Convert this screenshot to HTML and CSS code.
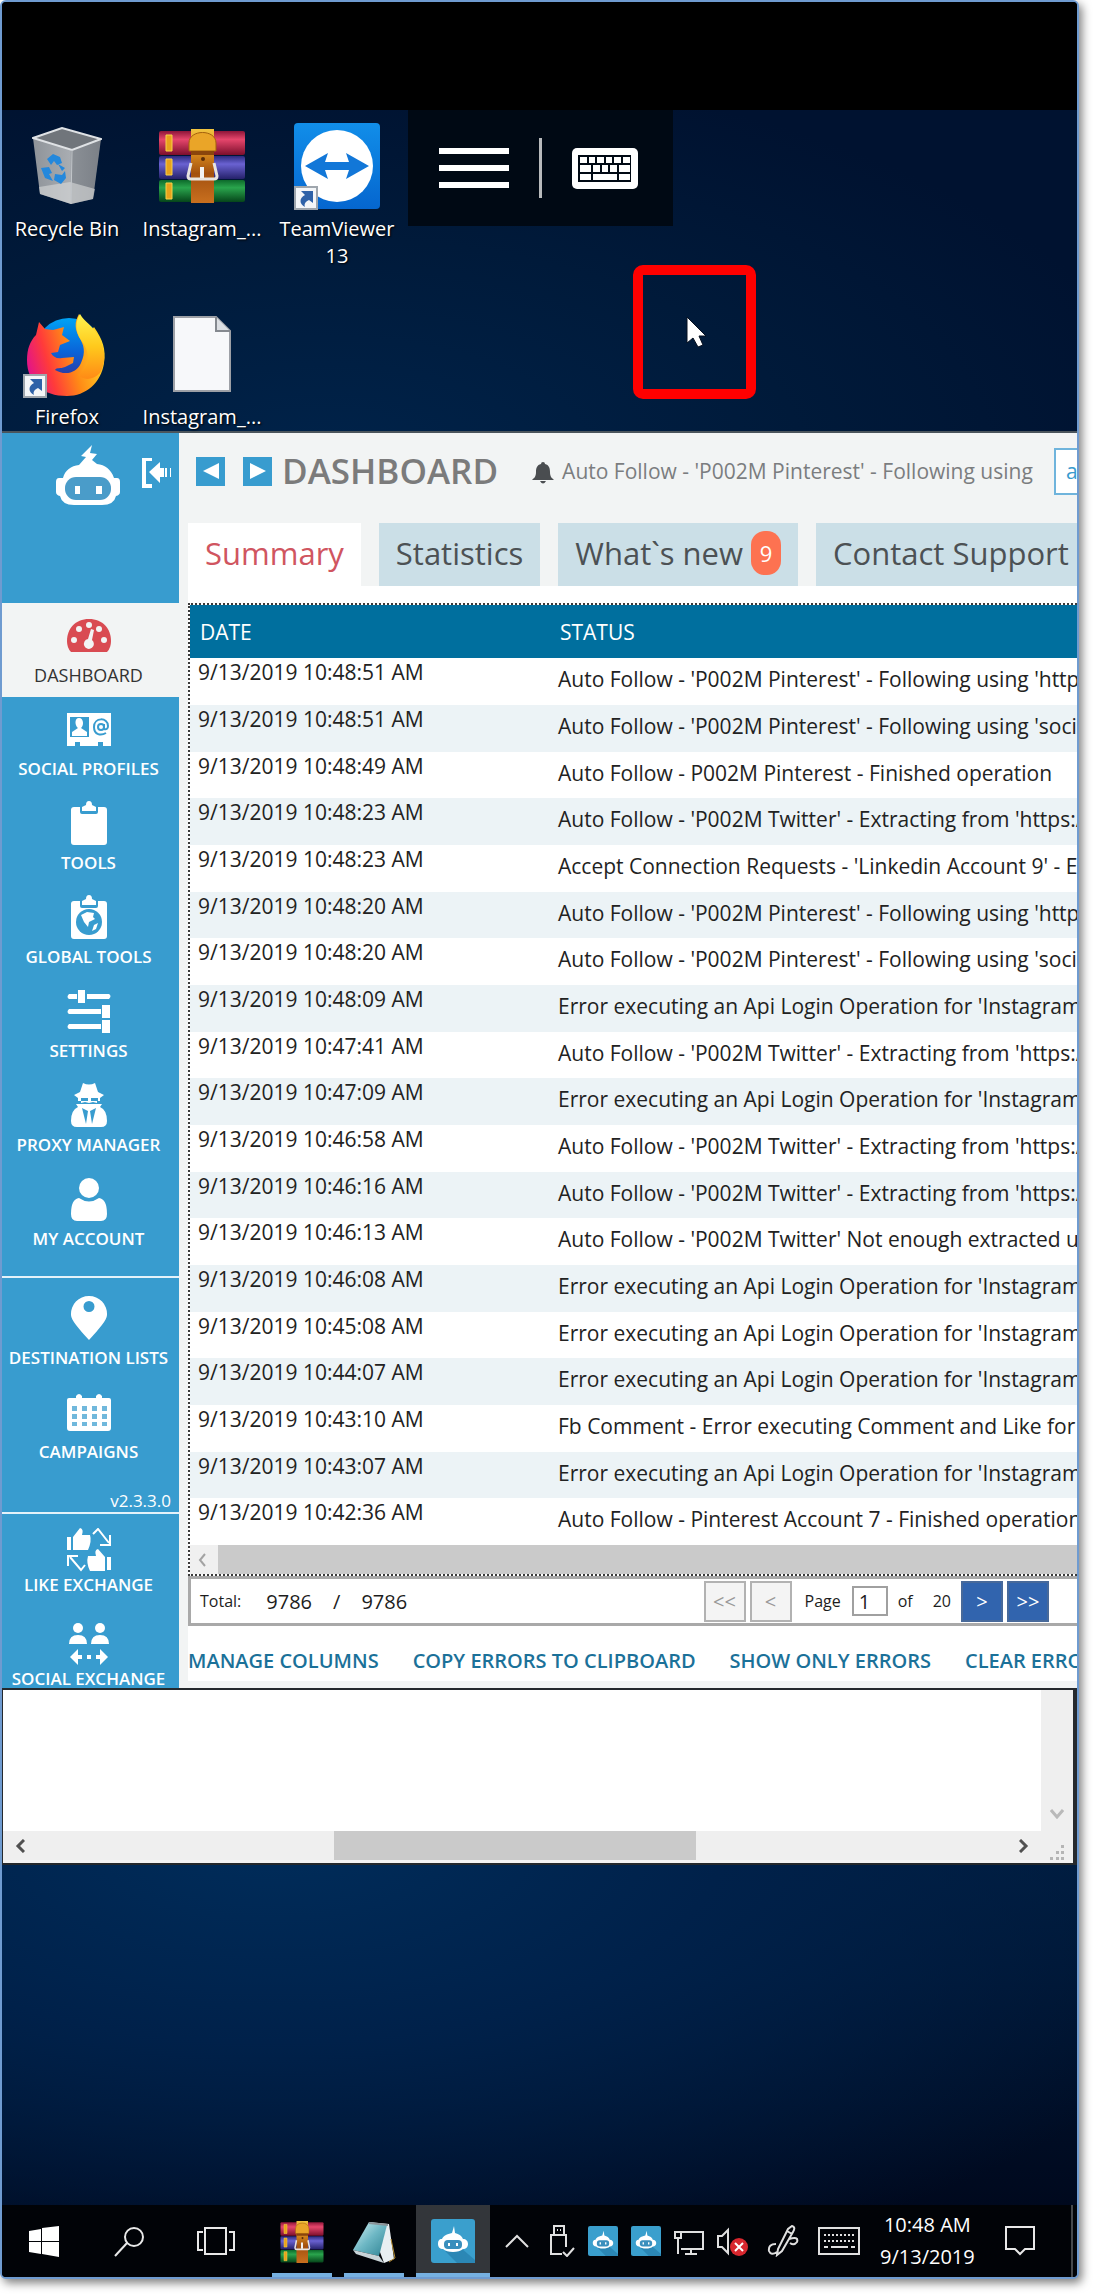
FILE: index.html
```html
<!DOCTYPE html>
<html lang="en">
<head>
<meta charset="utf-8">
<meta name="viewport" content="width=device-width, initial-scale=1">
<title>Dashboard</title>
<link rel="stylesheet" href="styles.css">
</head>
<body>
<svg class="sprite" width="0" height="0" aria-hidden="true">
  <defs>
    <linearGradient id="red" x2="0" y2="1"><stop stop-color="#8d1538"/><stop offset=".35" stop-color="#e6466c"/><stop offset="1" stop-color="#7c0f2c"/></linearGradient>
    <linearGradient id="blue" x2="0" y2="1"><stop stop-color="#2c2a7d"/><stop offset=".35" stop-color="#6a62d2"/><stop offset="1" stop-color="#25216a"/></linearGradient>
    <linearGradient id="green" x2="0" y2="1"><stop stop-color="#0d6a2b"/><stop offset=".35" stop-color="#2aa54d"/><stop offset="1" stop-color="#06451a"/></linearGradient>
    <linearGradient id="belt" x2="0" y2="1"><stop stop-color="#f1c440"/><stop offset=".3" stop-color="#dc8f1e"/><stop offset=".6" stop-color="#a3500f"/><stop offset="1" stop-color="#c9701f"/></linearGradient>
    <linearGradient id="binside" x2="1" y2="0"><stop stop-color="#8e9399"/><stop offset=".55" stop-color="#a9adb2"/><stop offset=".56" stop-color="#8b9096"/><stop offset="1" stop-color="#7b8087"/></linearGradient>
    <linearGradient id="tv" x2="0" y2="1"><stop stop-color="#118ee9"/><stop offset="1" stop-color="#0566cf"/></linearGradient>
    <linearGradient id="fox" x1="0" y1=".6" x2="1" y2=".3"><stop stop-color="#e31587"/><stop offset=".25" stop-color="#ff3b3a"/><stop offset=".55" stop-color="#ff8a16"/><stop offset="1" stop-color="#ffe226"/></linearGradient>
    <linearGradient id="globe" x2="0" y2="1"><stop stop-color="#00a3f5"/><stop offset=".5" stop-color="#0a63d8"/><stop offset="1" stop-color="#3b2a8c"/></linearGradient>
    <linearGradient id="flame" x2="0" y2="1"><stop stop-color="#fff44f"/><stop offset=".5" stop-color="#ffc91c"/><stop offset="1" stop-color="#ff8a16"/></linearGradient>
    <linearGradient id="pad" x2="1" y2="1"><stop stop-color="#d7f3f6"/><stop offset=".5" stop-color="#6db7c4"/><stop offset="1" stop-color="#2f8293"/></linearGradient>
  </defs>
  <symbol id="i-rar" viewBox="0 0 88 74">
    <rect x="1" y="2" width="86" height="24" rx="2" fill="url(#red)"/>
    <rect x="1" y="27" width="86" height="23" rx="2" fill="url(#blue)"/>
    <rect x="1" y="51" width="86" height="22" rx="2" fill="url(#green)"/>
    <path d="M8 6h6v16H8zM8 30h6v16H8zM8 54h6v16H8z" fill="#e8a21c" stroke="#f6d24a"/>
    <path d="M33 0h23v74H33z" fill="url(#belt)"/>
    <path d="M31 22v-8c0-14 27-14 27 0v8z" fill="#eaa528" stroke="#a3600d"/>
    <path d="M33 22h23v4H33z" fill="#8a450c"/>
    <path d="M33 34l-3 13q0 3 3 3h23q3 0 3-3l-3-13" fill="none" stroke="#e8e4e0" stroke-width="3"/>
    <path d="M44 38v11" stroke="#f2f2f2" stroke-width="4"/><circle cx="45" cy="30" r="2" fill="#5a2c08"/>
  </symbol>
  <symbol id="i-robot" viewBox="0 0 66 62">
    <path d="M37 2L26 13l5 1-7 8c-8 1-14 5-16 13H4q-3 0-3 4v10q0 3 4 4 2 9 14 9h28q12 0 14-9 4-1 4-4V39q0-4-3-4h-3c-3-9-9-13-17-14l-5-4 5-6-7-1z" fill="#fff"/>
    <rect x="10" y="34" width="46" height="23" rx="11" fill="#4a9cc9"/>
    <path d="M20 43h5v8h-5zM41 43h6v8h-6z" fill="#fff"/>
  </symbol>
  <symbol id="i-robot-app" viewBox="0 0 44 44">
    <rect width="44" height="44" rx="3" fill="#3a9fcd"/><path d="M14 32l16-3 14 12v3H26z" fill="#2b87b5"/>
    <path d="M23 7l-2 7c-5 1-9 3-10 6-3 0-4 2-4 5s2 5 5 5c2 2 6 3 10 3s8-1 10-3c3 0 5-2 5-5s-2-5-5-5c-1-3-4-5-8-6z" fill="#fff"/>
    <rect x="13" y="21" width="18" height="9" rx="4" fill="#3a8fbd"/><path d="M17 24h2v3h-2zM25 24h2v3h-2z" fill="#fff"/>
  </symbol>
  <symbol id="i-clip" viewBox="0 0 44 44">
    <path d="M7 6h6v5q0 2 2 2h14q2 0 2-2V6h6q3 0 3 3v32q0 3-3 3H7q-3 0-3-3V9q0-3 3-3z"/>
    <path d="M19 4q0-4 3-4t3 4l4 2v4H15V6z"/>
  </symbol>
  <symbol id="i-shortcut" viewBox="0 0 24 24">
    <path d="M1 1h22v22H1z" fill="#f4f6f8" stroke="#9fa6ad" stroke-width="2"/>
    <path d="M7 5h12v12l-4-3c-4 2-5 4-4 7-6-3-6-9 0-12z" fill="#2f62a8"/>
  </symbol>
</svg>

<div class="frame">
  <div class="letterbox"></div>

  <section class="desktop">
    <ul class="shortcuts">
      <li><span class="pic"><svg width="70" height="78" viewBox="0 0 70 78">
        <path d="M1 11L30 1l39 11-8 60-22 5-31-10z" fill="url(#binside)"/>
        <path d="M1 11L30 1l39 11-29 11z" fill="#70757b" stroke="#dfe2e5" stroke-width="2"/>
        <path d="M7 60l31-5 25 7-2 10-22 5-31-10z" fill="#d9dadb" opacity=".6"/>
        <path d="M40 23l-1 54" stroke="#c3c7cb"/>
        <path d="M15 32l6-5 7 3 2 6-5 2-3-4-3 4zM9 41l8-1 3 6-3 1 4 7-8-3zM23 47l7 1 3-4 1 7-5 6-7-4zM26 37l7 4-3 3z" fill="#2488dc"/></svg></span>Recycle Bin</li>
      <li><span class="pic"><svg width="88" height="74"><use href="#i-rar"/></svg></span>Instagram_...</li>
      <li><span class="pic"><svg width="88" height="88" viewBox="0 0 88 88">
        <rect x="1" y="1" width="86" height="86" rx="4" fill="url(#tv)"/><circle cx="44" cy="44" r="36" fill="#fff"/>
        <path d="M12 44l23-13-3 9h24l-3-9 23 13-23 13 3-9H32l3 9z" fill="#1277d8"/>
        <use href="#i-shortcut" x="1" y="64" width="24" height="24"/></svg></span>TeamViewer 13</li>
      <li><span class="pic"><svg width="88" height="88" viewBox="0 0 88 88">
        <circle cx="46" cy="42" r="34" fill="url(#globe)"/>
        <path d="M16 12l6 7 8 1 11-3-2 8 8 6-10 4-2 7-7 1c2 4 6 6 11 5l12-1-1 6-8 4c-5 2-8 0-10 3 10 6 22 3 26-7 5-11 3-18-2-26-4-8-5-14 0-23 5 8 8 9 12 17l3-4c9 13 12 22 10 36-3 20-18 33-37 33C20 86 4 73 4 50c0-11 3-19 9-25z" fill="url(#fox)"/>
        <path d="M57 4c5 9 12 10 19 23 8 16 6 27 1 36-8 8-17 7-22 2 14-9 12-23 3-35-6-9-6-18-1-26z" fill="url(#flame)"/>
        <use href="#i-shortcut" x="0" y="64" width="24" height="24"/></svg></span>Firefox</li>
      <li><span class="pic"><svg width="58" height="76" viewBox="0 0 58 76">
        <path d="M1 1h42l14 14v60H1z" fill="#f7f8fa" stroke="#9da0a6" stroke-width="2"/><path d="M43 1v14h14" fill="#dcdfe3" stroke="#85898f" stroke-width="2"/></svg></span>Instagram_...</li>
    </ul>
    <div class="remote-bar">
      <button type="button" aria-label="Menu"><svg width="70" height="40" viewBox="0 0 70 40" fill="#fff"><path d="M0 0h70v6H0zM0 17h70v6H0zM0 34h70v6H0z"/></svg></button>
      <span class="remote-split"></span>
      <button type="button" aria-label="Keyboard"><svg width="66" height="41" viewBox="0 0 66 41">
        <rect width="66" height="41" rx="5" fill="#fff"/><path d="M6 7h53v27H6z" fill="#000914"/>
        <path d="M8 9h7v6H8zM17 9h6v6h-6zM25 9h7v6h-7zM34 9h6v6h-6zM42 9h7v6h-7zM51 9h7v6h-7zM8 17h11v7H8zM21 17h7v7h-7zM30 17h6v7h-6zM38 17h7v7h-7zM47 17h11v7H47zM8 26h11v6H8zM21 26h24v6H21zM47 26h11v6H47z" fill="#fff"/></svg></button>
    </div>
    <div class="marker"><svg width="22" height="32" viewBox="0 0 22 32"><path d="M1 1v26l6-5 5 9 5-2-4-9h7z" fill="#fff" stroke="#061020"/></svg></div>
  </section>

  <section class="app">
    <aside class="side">
      <div class="brand">
        <svg width="66" height="62"><use href="#i-robot"/></svg>
        <button type="button" aria-label="Collapse menu"><svg width="30" height="30" viewBox="0 0 30 30" fill="#fff"><path d="M0 0h10v3H4v23h6v4H0zM7 14L18 4v6h4v9h-4v6zM23 10h2v9h-2zM28 10h1v9h-1z"/></svg></button>
      </div>
      <nav class="menu">
        <a class="on" href="#"><svg width="44" height="44" viewBox="0 0 44 44"><path d="M22 6C8 6 0 16 0 28q0 7 4 11h36q4-4 4-11C44 16 36 6 22 6z"/><g fill="#f2f4f4"><circle cx="7" cy="27" r="3"/><circle cx="12" cy="16" r="3"/><circle cx="22" cy="12" r="3"/><circle cx="32" cy="16" r="3"/><circle cx="37" cy="27" r="3"/><path d="M24 16l3 1-2 10a5 5 0 1 1-4-1z"/></g></svg>DASHBOARD</a>
        <a href="#"><svg width="44" height="44" viewBox="0 0 44 44"><path d="M0 6h44v33h-8v-4h-5v4H13v-4H8v4H0z"/><path d="M3 10h19v20H3z" fill="#389ccf"/><path d="M12 11c5 0 5 8 2 10l6 4v4H5v-4l6-4c-3-2-4-10 1-10z"/><g fill="none" stroke="#389ccf" stroke-width="2"><circle cx="34" cy="20" r="3"/><path d="M37 17v5q4 1 4-3c0-9-14-9-14 1 0 8 7 9 12 6"/></g></svg>SOCIAL PROFILES</a>
        <a href="#"><svg width="44" height="44"><use href="#i-clip"/></svg>TOOLS</a>
        <a href="#"><svg width="44" height="44" viewBox="0 0 44 44"><use href="#i-clip"/><circle cx="22" cy="27" r="13" fill="#389ccf"/><path d="M14 20l6-3 7 1-1 4 2 2-6 3-1 5-4-5zM27 30l4-2-2 6-4 2z"/></svg>GLOBAL TOOLS</a>
        <a href="#"><svg width="44" height="44" viewBox="0 0 44 44"><path d="M2 5h8v5H2q-3-2 0-5zM20 5h22q3 2 0 5H20zM11 1h7v13h-7zM2 20h32v5H2q-3-2 0-5zM35 16h8v13h-8zM2 35h32v5H2q-3-2 0-5zM35 31h8v13h-8z"/></svg>SETTINGS</a>
        <a href="#"><svg width="44" height="44" viewBox="0 0 44 44"><path d="M16 0q6 3 12 0l3 9 6 3-4 3v3h-3v2l-4-1-4 1-4-1-4 1v-2h-3v-3l-4-3 6-3z"/><path d="M9 21h26l-2 3q7 3 7 14 0 6-6 6H10q-6 0-6-6 0-11 7-14z"/><path d="M15 25l6 3-2 13zM29 25l-6 3 2 13z" fill="#389ccf"/><path d="M14 15h7v3h-7zM24 15h7v3h-7z" fill="#389ccf"/></svg>PROXY MANAGER</a>
        <a href="#"><svg width="44" height="44" viewBox="0 0 44 44"><circle cx="22" cy="11" r="10"/><path d="M12 21q10 7 20 0 8 1 8 16 0 7-6 7H10q-6 0-6-7 0-15 8-16z"/></svg>MY ACCOUNT</a>
      </nav>
      <nav class="menu second">
        <a href="#"><svg width="44" height="44" viewBox="0 0 44 44"><path fill-rule="evenodd" d="M22 0a18 18 0 0 1 18 19c0 5-8 14-18 25C12 33 4 24 4 19A18 18 0 0 1 22 0zm0 5a5 5 0 1 0 0 11 5 5 0 0 0 0-11z"/></svg>DESTINATION LISTS</a>
        <a href="#"><svg width="44" height="44" viewBox="0 0 44 44"><path d="M2 8h7V6q3-4 6 0v2h14V6q3-4 6 0v2h7q2 0 2 2v28q0 3-3 3H3q-3 0-3-3V10q0-2 2-2z"/><path d="M5 16h5v5H5zM15 16h5v5h-5zM25 16h5v5h-5zM35 16h5v5h-5zM5 24h5v5H5zM15 24h5v5h-5zM25 24h5v5h-5zM35 24h5v5h-5zM5 32h5v4H5zM15 32h5v4h-5zM25 32h5v4h-5zM35 32h5v4h-5z" fill="#70b8dc"/></svg>CAMPAIGNS</a>
        <span class="version">v2.3.3.0</span>
      </nav>
      <nav class="menu third">
        <a href="#"><svg width="44" height="44" viewBox="0 0 44 44"><path d="M0 9h4v13H0zM6 9l7-9q4 1 2 7h8q2 6-2 15H6zM40 29h4v13h-4zM38 29l-7-8q-4 1-2 7h-8q-2 7 2 15h15z"/><path d="M26 6l5-5 11 14M43 7v10H33M18 37l-4 5L3 29M1 38V28h10" fill="none" stroke="#fff" stroke-width="2"/></svg>LIKE EXCHANGE</a>
        <a href="#"><svg width="44" height="44" viewBox="0 0 44 44"><circle cx="11" cy="6" r="5"/><circle cx="33" cy="6" r="5"/><path d="M2 22q0-9 9-9t9 9zM24 22q0-9 9-9t9 9zM3 35l8-8v6h4v4h-4v6zM20 33h4v4h-4zM41 35l-8-8v6h-4v4h4v6z"/></svg>SOCIAL EXCHANGE</a>
      </nav>
    </aside>

    <main class="main">
      <header class="head">
        <button class="step" type="button" aria-label="Back"><svg width="16" height="16" viewBox="0 0 16 16"><path d="M16 0v16L0 8z" fill="#fff"/></svg></button>
        <button class="step" type="button" aria-label="Forward"><svg width="16" height="16" viewBox="0 0 16 16"><path d="M0 0v16l16-8z" fill="#fff"/></svg></button>
        <h1>DASHBOARD</h1>
        <svg class="bell" width="22" height="22" viewBox="0 0 22 22"><path d="M11 0q2 0 2 2c4 1 5 4 5 8 0 5 2 6 4 8H0c2-2 4-3 4-8 0-4 1-7 5-8q0-2 2-2zM8 19h6q-3 5-6 0z" fill="#4a4d50"/></svg>
        <p>Auto Follow - 'P002M Pinterest' - Following using</p>
        <button class="more" type="button">a</button>
      </header>
      <div class="tabs">
        <button class="on" type="button">Summary</button>
        <button type="button">Statistics</button>
        <button type="button">What`s new <span class="count">9</span></button>
        <button type="button">Contact Support</button>
      </div>
      <div class="panel">
        <div class="grid">
          <table>
            <thead><tr><th class="date">DATE</th><th>STATUS</th></tr></thead>
            <tbody>
              <tr><td>9/13/2019 10:48:51 AM</td><td>Auto Follow - 'P002M Pinterest' - Following using 'http</td></tr>
              <tr><td>9/13/2019 10:48:51 AM</td><td>Auto Follow - 'P002M Pinterest' - Following using 'soci</td></tr>
              <tr><td>9/13/2019 10:48:49 AM</td><td>Auto Follow - P002M Pinterest - Finished operation</td></tr>
              <tr><td>9/13/2019 10:48:23 AM</td><td>Auto Follow - 'P002M Twitter' - Extracting from 'https:/</td></tr>
              <tr><td>9/13/2019 10:48:23 AM</td><td>Accept Connection Requests - 'Linkedin Account 9' - Ex</td></tr>
              <tr><td>9/13/2019 10:48:20 AM</td><td>Auto Follow - 'P002M Pinterest' - Following using 'http</td></tr>
              <tr><td>9/13/2019 10:48:20 AM</td><td>Auto Follow - 'P002M Pinterest' - Following using 'soci</td></tr>
              <tr><td>9/13/2019 10:48:09 AM</td><td>Error executing an Api Login Operation for 'Instagram A</td></tr>
              <tr><td>9/13/2019 10:47:41 AM</td><td>Auto Follow - 'P002M Twitter' - Extracting from 'https:/</td></tr>
              <tr><td>9/13/2019 10:47:09 AM</td><td>Error executing an Api Login Operation for 'Instagram A</td></tr>
              <tr><td>9/13/2019 10:46:58 AM</td><td>Auto Follow - 'P002M Twitter' - Extracting from 'https:/</td></tr>
              <tr><td>9/13/2019 10:46:16 AM</td><td>Auto Follow - 'P002M Twitter' - Extracting from 'https:/</td></tr>
              <tr><td>9/13/2019 10:46:13 AM</td><td>Auto Follow - 'P002M Twitter' Not enough extracted us</td></tr>
              <tr><td>9/13/2019 10:46:08 AM</td><td>Error executing an Api Login Operation for 'Instagram A</td></tr>
              <tr><td>9/13/2019 10:45:08 AM</td><td>Error executing an Api Login Operation for 'Instagram A</td></tr>
              <tr><td>9/13/2019 10:44:07 AM</td><td>Error executing an Api Login Operation for 'Instagram A</td></tr>
              <tr><td>9/13/2019 10:43:10 AM</td><td>Fb Comment - Error executing Comment and Like for t</td></tr>
              <tr><td>9/13/2019 10:43:07 AM</td><td>Error executing an Api Login Operation for 'Instagram A</td></tr>
              <tr><td>9/13/2019 10:42:36 AM</td><td>Auto Follow - Pinterest Account 7 - Finished operation</td></tr>
            </tbody>
          </table>
          <div class="grid-scroll"><svg width="8" height="14" viewBox="0 0 8 14"><path d="M7 1L2 7l5 6" fill="none" stroke="#a3a3a3" stroke-width="2"/></svg><span></span></div>
        </div>
        <div class="pager">
          <span class="small">Total:</span>
          <span class="totals"><span>9786</span><span>/</span><span>9786</span></span>
          <div class="pages">
            <button type="button" disabled>&lt;&lt;</button>
            <button type="button" disabled>&lt;</button>
            <label for="page">Page</label>
            <input id="page" type="text" value="1">
            <span class="of">of</span>
            <span class="last">20</span>
            <button type="button" class="go">&gt;</button>
            <button type="button" class="go">&gt;&gt;</button>
          </div>
        </div>
        <div class="actions">
          <a href="#">MANAGE COLUMNS</a><a href="#">COPY ERRORS TO CLIPBOARD</a><a href="#">SHOW ONLY ERRORS</a><a href="#">CLEAR ERRO</a>
        </div>
      </div>
    </main>
  </section>

  <section class="notes">
    <div class="notes-page"></div>
    <div class="vbar"><svg width="14" height="10" viewBox="0 0 14 10"><path d="M1 1l6 7 6-7" fill="none" stroke="#b9b9b9" stroke-width="3"/></svg></div>
    <div class="hbar">
      <svg width="10" height="14" viewBox="0 0 10 14"><path d="M9 1L3 7l6 6" fill="none" stroke="#505050" stroke-width="3"/></svg>
      <div class="track"><span></span></div>
      <svg width="10" height="14" viewBox="0 0 10 14"><path d="M1 1l6 6-6 6" fill="none" stroke="#505050" stroke-width="3"/></svg>
    </div>
    <div class="grip"><svg width="15" height="15" viewBox="0 0 15 15" fill="#b5b5b5"><path d="M11 0h3v3h-3zM11 6h3v3h-3zM6 6h3v3H6zM11 12h3v3h-3zM6 12h3v3H6zM0 12h3v3H0z"/></svg></div>
  </section>

  <div class="wallpaper"></div>

  <footer class="taskbar">
    <div class="group">
      <button class="wide" type="button" aria-label="Start"><svg width="30" height="31" viewBox="0 0 30 31" fill="#fff"><path d="M0 5l12-2v12H0zM13 2l17-2v15H13zM0 16h12v12L0 26zM13 16h17v15l-17-3z"/></svg></button>
      <button class="wide" type="button" aria-label="Search"><svg width="31" height="31" viewBox="0 0 31 31" fill="none" stroke="#e8e8e8" stroke-width="2"><circle cx="20" cy="11" r="9"/><path d="M13 17L1 30"/></svg></button>
      <button class="wide" type="button" aria-label="Task view"><svg width="38" height="28" viewBox="0 0 38 28" fill="none" stroke="#e8e8e8" stroke-width="2"><path d="M8 1h21v26H8zM6 5H1v18h5M32 5h5v18h-5"/></svg></button>
    </div>
    <div class="group running">
      <button type="button" aria-label="Archive"><svg width="44" height="42" viewBox="0 0 88 74" preserveAspectRatio="none"><use href="#i-rar" width="88" height="74"/></svg></button>
      <button type="button" aria-label="Notepad"><svg width="44" height="42" viewBox="0 0 44 42"><path d="M17 1l20 2 5 35-10 4z" fill="#e9eff2"/><path d="M17 1l18 3-8 31-26-6z" fill="url(#pad)"/><path d="M1 29l26 6 5 7-28-9z" fill="#c9d4d8"/><path d="M17 2l19 2" stroke="#8a9499" stroke-width="2"/><path d="M39 18l4 19-6 4" stroke="#b38b31" fill="none"/></svg></button>
      <button class="on" type="button" aria-label="Robot"><svg width="44" height="44"><use href="#i-robot-app"/></svg></button>
    </div>
    <div class="tray">
      <svg class="chevron" width="24" height="14" viewBox="0 0 24 14" fill="none" stroke="#e0e0e0" stroke-width="2"><path d="M1 13L12 2l11 11"/></svg>
      <svg width="26" height="32" viewBox="0 0 26 32" fill="none" stroke="#e0e0e0" stroke-width="2"><path d="M5 10V1h10v9M13 29H2V10h15v12M14 27l4 4 7-8"/><path d="M8 5h1M11 5h1"/></svg>
      <svg width="30" height="30"><use href="#i-robot-app"/></svg>
      <svg width="30" height="30"><use href="#i-robot-app"/></svg>
      <svg width="30" height="28" viewBox="0 0 30 28" fill="none" stroke="#e0e0e0" stroke-width="2"><path d="M7 5h22v17H7M17 22v5M11 27h12M4 10v17M1 5h6v6H1z"/></svg>
      <svg width="31" height="30" viewBox="0 0 31 30"><path d="M1 10h4l6-6v23l-6-6H1z" fill="none" stroke="#e0e0e0" stroke-width="2"/><circle cx="22" cy="21" r="9" fill="#d8272e"/><path d="M18 17l8 8M26 17l-8 8" stroke="#fff" stroke-width="2"/></svg>
      <svg class="pen" width="32" height="32" viewBox="0 0 32 32" fill="none" stroke="#e0e0e0" stroke-width="2"><path d="M25 1q4 1 1 6L15 26l-5 4 1-6L21 4zM20 6l5 3M9 19q-8 0-7 7 2 5 8 1M22 14q10-3 8 3-3 4-7 1"/></svg>
      <svg class="kbd" width="42" height="28" viewBox="0 0 42 28" fill="none" stroke="#e0e0e0" stroke-width="2"><path d="M1 1h40v26H1z"/><path d="M6 8h31M6 14h31" stroke-dasharray="2 2"/><path d="M6 20h4M13 20h17M33 20h4"/></svg>
      <time>10:48 AM<br>9/13/2019</time>
      <svg width="30" height="30" viewBox="0 0 30 30" fill="none" stroke="#e8e8e8" stroke-width="2"><path d="M1 1h28v22h-9l-5 5-5-5H1z"/></svg>
      <span class="peek"></span>
    </div>
  </footer>
</div>
</body>
</html>
```
FILE: styles.css
```css
* { box-sizing: border-box; }

body {
  margin: 0;
  background: #fff;
  color: #1d1d1d;
  font: 20px/27px "Open Sans", "Noto Sans", sans-serif;
}

button, input { font: inherit; color: inherit; padding: 0; border: 0; background: none; }
button { display: flex; align-items: center; justify-content: center; flex: none; white-space: nowrap; }
svg { display: block; flex: none; }
a { text-decoration: none; }
.sprite { position: absolute; }

.frame {
  display: flex;
  flex-direction: column;
  min-height: calc(100vh - 16px);
  margin: 0 16px 16px 0;
  border: 2px solid #6f9bd0;
  border-radius: 6px;
  overflow: hidden;
  background: #000b20;
  box-shadow: 3px 4px 10px rgba(0, 0, 0, .5);
}

.letterbox { height: 108px; background: #000; }

/* desktop */
.desktop {
  position: relative;
  padding-top: 12px;
  background: radial-gradient(ellipse at 30% 110%, #00234a, #001a3a 45%, transparent 80%), #001230;
}
.shortcuts {
  display: grid;
  grid-template-columns: repeat(3, 130px);
  column-gap: 5px;
  row-gap: 39px;
  margin: 0;
  padding: 0;
  list-style: none;
  color: #fff;
  text-align: center;
  text-shadow: 1px 1px 2px #000;
}
.shortcuts li { height: 149px; }
.shortcuts li:nth-child(n+4) { height: 121px; }
.pic { display: flex; align-items: center; justify-content: center; height: 88px; margin-bottom: 5px; }

.remote-bar {
  position: absolute;
  top: 0;
  left: 406px;
  display: flex;
  align-items: center;
  gap: 30px;
  height: 116px;
  padding: 0 35px 0 31px;
  background: #000914;
}
.remote-split { width: 3px; height: 60px; background: #b8babc; }

.marker {
  position: absolute;
  top: 155px;
  left: 631px;
  display: flex;
  align-items: center;
  justify-content: center;
  width: 123px;
  height: 134px;
  padding-left: 4px;
  border: 10px solid #f00;
  border-radius: 10px;
}

/* application window */
.app { display: flex; border-top: 2px solid #4b555c; background: #f2f4f4; }

.side {
  flex: none;
  width: 177px;
  height: 1255px;
  overflow: hidden;
  background: #389ccf;
}
.brand { display: flex; align-items: flex-start; gap: 21px; height: 170px; padding: 10px 0 0 53px; }
.brand button { margin-top: 15px; }
.menu { padding-bottom: 15px; }
.menu a {
  display: flex;
  flex-direction: column;
  align-items: center;
  gap: 8px;
  height: 94px;
  padding: 10px 4px 0 0;
  color: #fff;
  fill: #fff;
  font-size: 17px;
  font-weight: 600;
  line-height: 20px;
  white-space: nowrap;
}
.menu a.on { background: #f2f4f4; color: #333; fill: #d94b52; font-size: 18px; font-weight: 400; }
.second, .third { border-top: 2px solid #e4f2fa; }
.second { padding: 8px 0 0; }
.third { padding: 4px 0 0; }
.third a { gap: 3px; }
.version { display: block; height: 38px; padding: 17px 8px 0 0; color: #fff; font-size: 17px; line-height: 20px; text-align: right; }

.main { flex: 1; min-width: 0; padding-left: 9px; overflow: hidden; }
.head { display: flex; align-items: center; height: 90px; padding: 0 0 14px 8px; color: #7b7d7f; font-size: 21px; white-space: nowrap; }
.step { width: 29px; height: 29px; margin-right: 18px; background: #389ccf; }
.head h1 { margin: 0 34px 0 -8px; color: #7b7b7b; font-size: 35px; font-weight: 600; line-height: 40px; }
.head p { flex: none; width: 492px; margin: 0 0 0 8px; }
.bell { margin-top: 3px; }
.more { width: 120px; height: 47px; padding-left: 10px; justify-content: flex-start; border: 2px solid #6fb4dc; background: #fff; color: #389ccf; }

.tabs { display: flex; gap: 18px; }
.tabs button { height: 63px; padding: 0 17px 4px; background: #cbdfe7; color: #4c5154; font-size: 31px; line-height: 40px; }
.tabs button.on { background: #fff; color: #d05560; }
.count { width: 30px; margin-left: 8px; border-radius: 14px; background: #fd7251; color: #fff; font-size: 22px; line-height: 44px; text-align: center; }

.panel { padding-top: 17px; background: #fff; }
.grid { border: dotted #3a3a3a; border-width: 2px 0 2px 2px; }
table { width: 100%; border-collapse: collapse; table-layout: fixed; color: #222; font-size: 21px; white-space: nowrap; }
th { height: 53px; padding: 2px 0 0 10px; background: #006f9e; color: #fff; font-weight: 400; text-align: left; }
th.date { width: 360px; }
td { height: 47px; padding: 1px 0 0 8px; vertical-align: top; overflow: hidden; }
td + td { padding-top: 8px; }
tr:nth-child(3n) td { height: 46px; }
tbody tr:nth-child(even) { background: #ecf3f6; }
.grid-scroll { display: flex; align-items: center; gap: 12px; height: 29px; padding-left: 8px; background: #f0f0f0; }
.grid-scroll span { flex: 1; height: 29px; background: #cacaca; }

.pager { display: flex; align-items: center; height: 50px; padding-left: 9px; border: solid #a9a9a9; border-width: 3px 0 3px 3px; font-size: 16px; white-space: nowrap; }
.totals { display: flex; gap: 21px; margin-left: 25px; font-size: 20px; }
.pages { display: flex; align-items: center; margin: 0 24px 0 auto; }
.pages button { width: 42px; height: 41px; margin-right: 4px; border: 2px solid #b2b2b2; background: #f4f4f4; color: #999; font-size: 20px; }
.pages .go { border-color: #47699a; background: #3164ae; color: #fff; }
.pages label { margin: 0 11px 0 9px; }
.pages input { width: 36px; height: 30px; padding-left: 5px; border: 2px solid #a0a0a0; background: #fff; font-size: 20px; }
.of { margin: 0 20px 0 10px; }
.last { margin-right: 10px; }

.actions { display: flex; gap: 34px; padding: 21px 0 7px; font-size: 20px; font-weight: 600; white-space: nowrap; }
.actions a { color: #1b7199; }

/* notepad window behind */
.notes {
  display: grid;
  grid-template: 141px 29px / 1fr 32px;
  padding-bottom: 3px;
  border: solid #25292d;
  border-width: 2px 4px 2px 1px;
  background: #f4f4f4;
}
.notes-page { background: #fff; }
.vbar { display: flex; align-items: flex-end; justify-content: center; padding-bottom: 12px; background: #efefef; }
.hbar { display: flex; align-items: center; justify-content: space-between; padding: 0 12px; background: #efefef; }
.track { flex: 1; display: flex; justify-content: center; padding: 0 39px 0 25px; }
.track span { flex: none; width: 39%; height: 29px; background: #cacaca; }
.grip { display: flex; align-items: flex-end; justify-content: center; background: #efefef; }

.wallpaper {
  flex: 1;
  background: radial-gradient(ellipse at 25% -10%, #002d5b, #00214a 40%, transparent 90%), linear-gradient(#001a3a, #00091e);
}

/* taskbar */
.taskbar { display: flex; height: 72px; background: #010307; color: #fff; }
.group { display: flex; }
.wide { width: 86px; padding-right: 3px; }
.running { gap: 12px; margin-left: 12px; }
.running button { width: 60px; padding-top: 1px; }
.running button:not(.on) { background: linear-gradient(#76b0e0, #76b0e0) center bottom / 60px 4px no-repeat; }
.running .on { width: 74px; border-bottom: 4px solid #76b0e0; background: #33363a; padding-top: 4px; }
.tray { display: flex; flex: 1; align-items: center; gap: 13px; margin-left: 15px; }
.chevron { margin-right: 7px; }
.pen, .kbd { margin-left: 6px; }
.tray time { line-height: 32px; text-align: center; margin: 0 17px 0 7px; white-space: nowrap; }
.peek { width: 2px; height: 72px; margin: 0 4px 0 auto; background: #45484c; }
```
